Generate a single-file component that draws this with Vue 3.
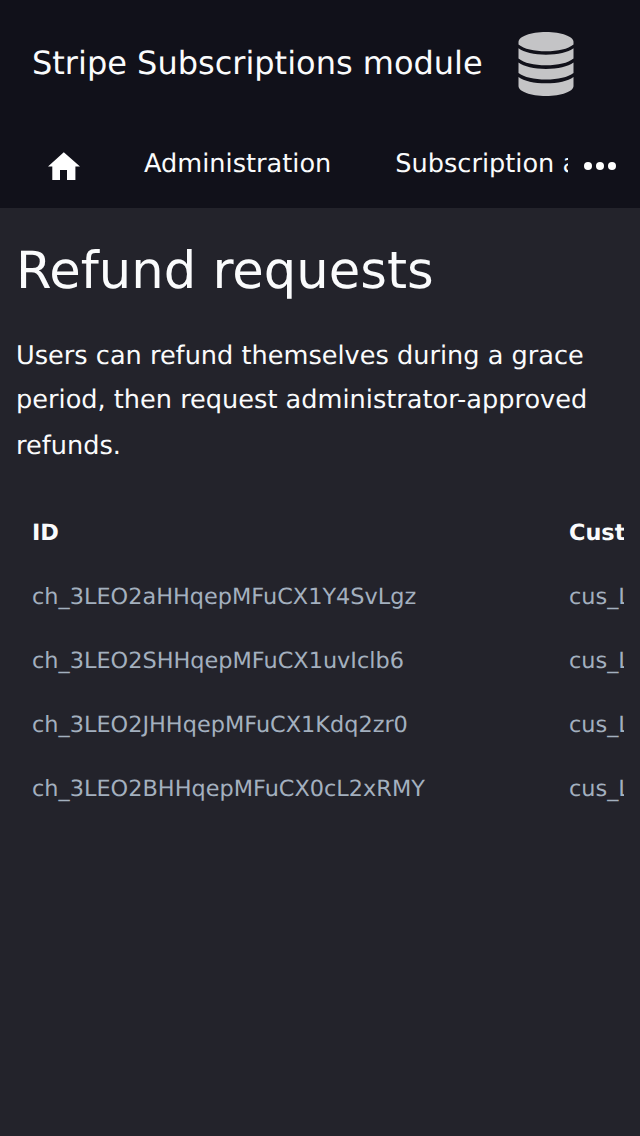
<script setup>
const intro = [
  'Users can refund themselves during a grace',
  'period, then request administrator-approved',
  'refunds.',
]
const rows = [
  { id: 'ch_3LEO2aHHqepMFuCX1Y4SvLgz', customer: 'cus_LwKq3' },
  { id: 'ch_3LEO2SHHqepMFuCX1uvIclb6', customer: 'cus_LwKq2' },
  { id: 'ch_3LEO2JHHqepMFuCX1Kdq2zr0', customer: 'cus_LwKq1' },
  { id: 'ch_3LEO2BHHqepMFuCX0cL2xRMY', customer: 'cus_LwKq0' },
]
</script>

<template>
  <div class="page">
    <header>
      <div class="brand">
        <span class="title">Stripe Subscriptions module</span>
        <svg class="database" width="56" height="64" viewBox="0 0 56 64" fill="#c4c4c6">
          <path d="M.500 10C.500 4.500 12.500 0 28 0S55.500 4.500 55.500 10V12.500C50 17 40 19.300 28 19.300S6 17 .500 12.500Z" />
          <path d="M.500 16.300C6 20.500 16 22.700 28 22.700S50 20.500 55.500 16.300V26.500C50 31 40 33.300 28 33.300S6 31 .500 26.500Z" />
          <path d="M.500 30.500C6 34.700 16 36.900 28 36.900S50 34.700 55.500 30.500V41C50 45.200 40 47.500 28 47.500S6 45.200 .500 41Z" />
          <path d="M.500 44.900C6 49 16 51.200 28 51.200S50 49 55.500 44.900V54C55.500 59.500 43.500 64 28 64S.500 59.500 .500 54Z" />
        </svg>
      </div>
      <nav>
        <div class="links">
          <svg class="home" width="32" height="28" viewBox="0 0 32 28" fill="#fff">
            <path d="M15.800 .2L32 14.500H27.400V28H19V18H12V28H4.300V14.500H0Z" />
          </svg>
          <span>Administration</span>
          <span class="second">Subscription administration</span>
        </div>
        <svg class="more" width="32" height="8" viewBox="0 0 32 8" fill="#fff">
          <circle cx="4" cy="4" r="4" /><circle cx="16" cy="4" r="4" /><circle cx="28" cy="4" r="4" />
        </svg>
      </nav>
    </header>
    <main>
      <h1>Refund requests</h1>
      <p><span v-for="line in intro" :key="line">{{ line }} </span></p>
      <div class="table">
        <div class="row head"><span>ID</span><span>Customer</span></div>
        <div v-for="row in rows" :key="row.id" class="row">
          <span>{{ row.id }}</span><span>{{ row.customer }}</span>
        </div>
      </div>
    </main>
  </div>
</template>

<style>
body { background: #23232b; }
</style>

<style scoped>
.page {
  width: 640px;
  height: 1136px;
  overflow: hidden;
  background: #23232b;
  color: #fafbfc;
  font-family: "DejaVu Sans", sans-serif;
  text-rendering: geometricPrecision;
}
header { height: 208px; background: #11111a; }
.brand { display: flex; height: 128px; padding-left: 32px; align-items: center; box-sizing: border-box; }
.title { width: 486px; margin-top: -2px; font-size: 32px; white-space: nowrap; }
nav { display: flex; height: 80px; }
.links { display: flex; width: 520px; padding-left: 48px; overflow: hidden; white-space: nowrap; font-size: 25.6px; line-height: 72px; }
.home { flex: none; margin: 24px 64px 0 0; }
.second { margin-left: 64px; }
.more { margin: 34px 0 0 16px; }
main { padding: 0 16px; }
h1 { margin: 0; padding-top: 33px; font-size: 51.2px; line-height: 60px; font-weight: 400; }
p { height: 134px; margin: 33px 0 0; font-size: 25.6px; line-height: 44px; }
p span { display: block; }
p span:last-child { margin-top: 2px; }
.table { margin-top: 33px; overflow: hidden; color: #a3b0bf; font-size: 22.4px; }
.row { display: grid; width: 900px; grid-template-columns: 537px 1fr; height: 64px; padding-left: 16px; align-items: center; box-sizing: border-box; }
.head { color: #fafbfc; font-weight: 700; }
</style>
